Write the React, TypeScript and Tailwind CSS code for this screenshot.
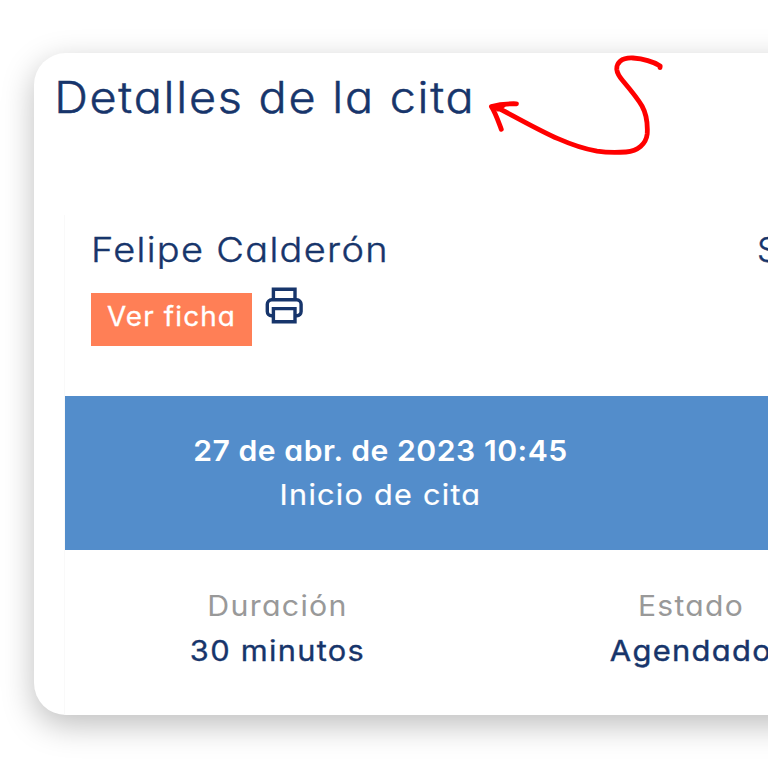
import React from 'react';

function PrinterIcon() {
  return (
    <svg width="40" height="40" viewBox="0 0 40 40" fill="none" stroke="#17356b" strokeWidth="3.4" strokeLinejoin="round" className="mt-px shrink-0">
      <path d="M9.4 13.6V3.2h21.6v10.4" strokeLinejoin="miter" />
      <path d="M9.4 29.8H7.5a4.2 4.2 0 0 1-4.2-4.2v-7.4a4.4 4.4 0 0 1 4.4-4.4h25a4.4 4.4 0 0 1 4.4 4.4v7.4a4.2 4.2 0 0 1-4.2 4.2h-1.9" />
      <path d="M9.4 22.6h21.6v13.2H9.4z" strokeLinejoin="miter" />
    </svg>
  );
}

function HandArrow() {
  return (
    <svg width="190" height="110" viewBox="480 50 190 110" fill="none" stroke="#ff0000" strokeLinecap="round" strokeLinejoin="round" className="absolute top-[-3px] left-[446px]">
      <path strokeWidth="4.8" d="M660 67.6L660.2 66C652 61 642 58.6 633 58C621 57.4 616.4 63 616.8 69.5C617.2 74 620 77.5 623 81C631 90.5 637 97.5 642 106C647 115 647.8 124 647.2 134C646 144 638 151 626 152C617 152.7 605 152.4 597 151.2C562 145 530 124 495 106.5" />
      <path strokeWidth="4.8" d="M516.5 103.8C508 103.6 499 104.4 491.4 106.5C496 114 498.5 122 501.3 129.3" />
      <path strokeWidth="3" fill="#ff0000" d="M493 106L504 106L498 110z" />
    </svg>
  );
}

export default function App() {
  return (
    <div className="h-[768px] w-[768px] overflow-hidden bg-white pt-[53px] pl-[34px] font-['Inter','Liberation_Sans',sans-serif] whitespace-nowrap text-[#17356b] [font-feature-settings:'cv11']">
      <main className="relative h-[662px] w-[900px] rounded-[32px] bg-white pt-[14px] shadow-[0_10px_32px_rgba(0,0,0,0.26)]">
        <h1 className="origin-left scale-x-[1.088] pl-[18.5px] text-[43px] leading-[60px] font-light tracking-[1.6px] [-webkit-text-stroke:0.5px_#17356b]">Detalles de la cita</h1>
        <HandArrow />

        <section className="mt-[88px] ml-[30px] h-[500px] border-l border-[#f9f9f9]">
          <div className="flex h-[181px] pt-[11px] pl-[26px]">
            <div className="w-[666px]">
              <h2 className="origin-left scale-x-[1.1] text-[34.5px] leading-[48px] font-light tracking-[1.2px] [-webkit-text-stroke:0.4px_#17356b]">Felipe Calderón</h2>
              <div className="mt-[11px] flex gap-[12px]">
                <button className="mt-[8px] h-[53px] w-[161px] bg-[#ff7f56] pb-[7px] text-center text-[26.5px] leading-[46px] tracking-[1.1px] text-white"><span className="inline-block scale-x-[1.05] [-webkit-text-stroke:0.3px_white]">Ver ficha</span></button>
                <PrinterIcon />
              </div>
            </div>
            <h2 className="text-[34.5px] leading-[48px] font-light [-webkit-text-stroke:0.4px_#17356b]">S</h2>
          </div>

          <div className="h-[154px] bg-[#538dcb] pt-[33px] text-center text-[29px] leading-[44px] text-white">
            <div className="w-[631px]">
              <p className="scale-x-[1.04] font-semibold tracking-[0.5px]">27 de abr. de 2023 10:45</p>
              <p className="scale-x-[1.055] tracking-[1.2px] [-webkit-text-stroke:0.2px_white]">Inicio de cita</p>
            </div>
          </div>

          <div className="flex pt-[33px] text-center text-[28.5px] leading-[45px]">
            <div className="w-[425px]">
              <p className="scale-x-[1.065] tracking-[1.2px] text-[#999999]">Duración</p>
              <p className="scale-x-[1.08] tracking-[1.2px] [-webkit-text-stroke:0.3px_#17356b]">30 minutos</p>
            </div>
            <div className="w-[402px]">
              <p className="scale-x-[1.055] tracking-[1.2px] text-[#999999]">Estado</p>
              <p className="scale-x-[1.085] tracking-[1.2px] [-webkit-text-stroke:0.4px_#17356b]">Agendado</p>
            </div>
          </div>
        </section>
      </main>
    </div>
  );
}
